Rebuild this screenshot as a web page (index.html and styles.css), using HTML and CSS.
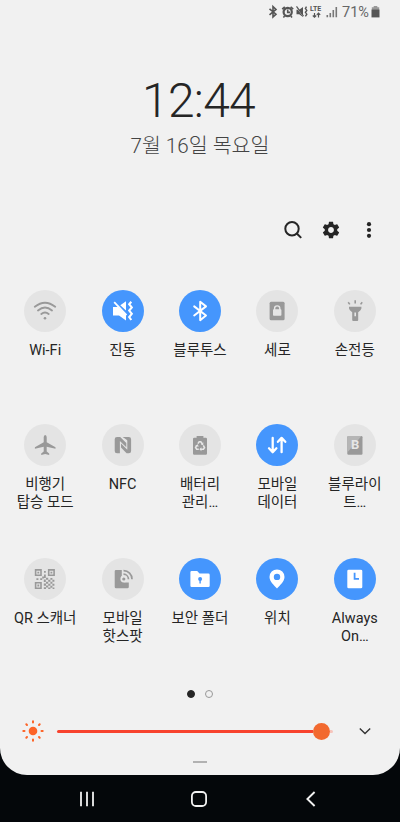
FILE: index.html
```html
<!DOCTYPE html>
<html lang="ko">
<head>
<meta charset="utf-8">
<title>빠른 설정</title>
<link rel="stylesheet" href="styles.css">
</head>
<body>
<main class="panel">
  <header class="status">
    <svg class="status-icons" width="78" height="16" viewBox="0 0 78 16" fill="none" stroke="#555" stroke-width="1.6">
      <path d="M1.5 4.8L8 10.2L5 13V2.6L8 5.4L1.5 10.8"/>
      <circle cx="19.7" cy="8" r="4.1" stroke-width="2.2"/>
      <path d="M14.2 5.2L16.8 2.8M25.2 5.2L22.6 2.8M19.7 5.5V8.4H22M16.6 12L15.4 13.4M22.8 12L24 13.4"/>
      <path d="M28.5 5.8H31.2L35 3V13L31.2 10.2H28.5Z" fill="#555" stroke="none"/>
      <path d="M27.8 2.2L36 13.4" stroke="#f1f1f1" stroke-width="1"/>
      <path d="M28.5 2.4L35.5 12.2" stroke-width="1.2"/>
      <path d="M38.5 2.6L37.4 4.5L38.8 6.4L37.4 8.3L38.8 10.2L37.4 12.4" stroke-width="1.4"/>
      <path d="M46.5 9V13.2M44.8 11.5L46.5 13.2L48.2 11.5M50.5 13.4V9.2M48.8 10.9L50.5 9.2L52.2 10.9" stroke-width="1.2"/>
      <text x="42" y="7.2" class="lte">LTE</text>
      <path d="M59.3 11V13.2M62.3 9V13.2M65.3 6V13.2M68.3 3V13.2" stroke="#777" stroke-width="1.6"/>
    </svg>
    <span class="percent">71%</span>
    <svg width="9" height="14" viewBox="0 0 9 14"><path d="M2.7 1H6.3V2.2H8.2V5H.8V2.2H2.7Z" fill="#999"/><path d="M.5 4.6H8.5V12.4H.5Z" fill="#555"/></svg>
  </header>

  <time class="clock">12:44</time>
  <div class="date">7월 16일 목요일</div>

  <nav class="actions">
    <svg width="20" height="20" viewBox="0 0 20 20" fill="none" stroke="#252525" stroke-width="2"><circle cx="9" cy="8.7" r="6.7"/><path d="M13.8 13.5L18.2 17.9"/></svg>
    <svg width="20" height="20" viewBox="0 0 24 24" fill="#252525"><path d="M19.43 12.98c.04-.32.07-.64.07-.98s-.03-.66-.07-.98l2.11-1.65c.19-.15.24-.42.12-.64l-2-3.46c-.12-.22-.39-.3-.61-.22l-2.49 1c-.52-.4-1.08-.73-1.69-.98l-.38-2.65C14.46 2.18 14.25 2 14 2h-4c-.25 0-.46.18-.49.42l-.38 2.65c-.61.25-1.17.59-1.69.98l-2.49-1c-.23-.09-.49 0-.61.22l-2 3.46c-.13.22-.07.49.12.64l2.11 1.65c-.04.32-.07.65-.07.98s.03.66.07.98l-2.11 1.65c-.19.15-.24.42-.12.64l2 3.46c.12.22.39.3.61.22l2.49-1c.52.4 1.08.73 1.69.98l.38 2.65c.03.24.24.42.49.42h4c.25 0 .46-.18.49-.42l.38-2.65c.61-.25 1.17-.59 1.69-.98l2.49 1c.23.09.49 0 .61-.22l2-3.46c.12-.22.07-.49-.12-.64l-2.11-1.65zM12 15.5c-1.93 0-3.5-1.57-3.5-3.5s1.57-3.5 3.5-3.5 3.5 1.57 3.5 3.5-1.57 3.5-3.5 3.5z"/></svg>
    <svg width="20" height="20" viewBox="0 0 20 20" fill="#252525"><circle cx="10" cy="4.2" r="2.1"/><circle cx="10" cy="10" r="2.1"/><circle cx="10" cy="15.8" r="2.1"/></svg>
  </nav>

  <section class="tiles">
    <div class="tile"><svg class="icon" viewBox="0 0 42 42" fill="none" stroke="#999" stroke-width="1.9" stroke-linecap="round"><path d="M10.8 16.7Q21 8.6 31.2 16.7M14 20.4Q21 14.8 28 20.4M17.3 24Q21 21 24.7 24"/><circle cx="21" cy="28.2" r="1.3" fill="#999" stroke="none"/></svg><span>Wi-Fi</span></div>
    <div class="tile on"><svg class="icon" viewBox="0 0 42 42" fill="#fff"><path d="M11 17H16L24 25V30.6L17 25.5H11ZM18.3 15.2L24 11.3V20.5Z"/><path d="M12.2 12.2L24.5 25.2" stroke="#fff" stroke-width="1.8"/><path d="M29.3 11.8L27.2 14.2L29.8 17.4L27.2 20.6L29.8 23.8L27.2 27L29.3 30" fill="none" stroke="#fff" stroke-width="2.1"/></svg><span>진동</span></div>
    <div class="tile on"><svg class="icon" viewBox="0 0 42 42" fill="none" stroke="#fff" stroke-width="2" stroke-linejoin="round" stroke-linecap="round"><path d="M15.2 16.4L27 25.5L21.2 30.2V11.8L27 16.4L15.2 25.5"/></svg><span>블루투스</span></div>
    <div class="tile"><svg class="icon" viewBox="0 0 42 42"><rect x="13.6" y="11.7" width="15" height="18.6" rx="1.5" fill="#999"/><rect x="17" y="19.3" width="8.4" height="6.4" rx=".8" fill="#e6e6e6"/><path d="M18.6 20V18.5A2.6 2.6 0 0 1 23.8 18.5V20" fill="none" stroke="#e6e6e6" stroke-width="1.4"/></svg><span>세로</span></div>
    <div class="tile"><svg class="icon" viewBox="0 0 42 42" fill="#999"><path d="M15 16.8H27.4V18.5Q27.2 20 24.2 22.2V30Q24.2 31 23.2 31H19.2Q18.2 31 18.2 30V22.2Q15.2 20 15 18.5Z"/><path d="M21.2 22.5V26.3" stroke="#e6e6e6" stroke-width="1.6"/><path d="M21.2 10.2V13.4M14.2 12.2L15.8 14.4M28.2 12.2L26.6 14.4" stroke="#999" stroke-width="1.6"/></svg><span>손전등</span></div>

    <div class="tile"><svg class="icon" viewBox="0 0 42 42" fill="#999"><path d="M21.2 11Q22.7 11.4 22.7 13.2V18.2L31.5 23.2V24.8L22.7 22.7V27.4L25.2 29.6V31L21.2 30L17.2 31V29.6L19.7 27.4V22.7L10.9 24.8V23.2L19.7 18.2V13.2Q19.7 11.4 21.2 11Z"/></svg><span>비행기<br>탑승 모드</span></div>
    <div class="tile"><svg class="icon" viewBox="0 0 42 42" fill="#999"><path d="M15 13H18.2L24.3 19V23.2L17.9 17V29.3H15Q12.7 29.3 12.7 27V15.3Q12.7 13 15 13Z"/><path d="M20.6 13H26.8Q29.1 13 29.1 15.3V27Q29.1 29.3 26.8 29.3H24.6L19 23.6V19.6L25.3 25.8V16.4L24.3 15.6Z"/></svg><span>NFC</span></div>
    <div class="tile"><svg class="icon" viewBox="0 0 42 42"><path d="M17.6 12H24.4V13.7H26.8Q28 13.7 28 15V29.4Q28 30.7 26.8 30.7H15.2Q14 30.7 14 29.4V15Q14 13.7 15.2 13.7H17.6Z" fill="#999"/><path d="M18.9 19.6L20.2 17.8H21.8L23.2 19.8M24.3 21.4L25.5 23.6L24.4 25.3H21.8M19.8 25.3H17.7L16.6 23.4L17.8 21.4" fill="none" stroke="#e6e6e6" stroke-width="1.6"/><path d="M24.3 18.2V21.2L21.8 20.4ZM22.4 23.3V27.3L20.4 25.3ZM16.4 21.6L19 20.2L19.5 23Z" fill="#e6e6e6"/></svg><span>배터리<br>관리…</span></div>
    <div class="tile on"><svg class="icon" viewBox="0 0 42 42" fill="none" stroke="#fff" stroke-width="2.3" stroke-linecap="round" stroke-linejoin="round"><path d="M16.7 13.9V28M13 24.3L16.7 28.2L20.4 24.3M25.6 28.2V14.2M21.9 17.8L25.6 13.9L29.3 17.8"/></svg><span>모바일<br>데이터</span></div>
    <div class="tile"><svg class="icon" viewBox="0 0 42 42"><rect x="13.3" y="12" width="15.2" height="18.7" rx="1.2" fill="#999"/><path d="M14.3 12H27.5L13.3 28.6V13Q13.3 12 14.3 12Z" fill="#b5b5b5"/><text x="21.1" y="25.4" class="letter">B</text></svg><span>블루라이<br>트…</span></div>

    <div class="tile"><svg class="icon" viewBox="0 0 42 42" fill="none" stroke="#999" stroke-width="1.6"><path d="M11.6 11.9h5.4v5.4h-5.4zM24.7 11.9h5.4v5.4h-5.4zM11.6 24.8h5.4v5.4h-5.4z"/><g fill="#999" stroke="none"><path d="M13.4 13.7h1.8v1.8h-1.8zM26.5 13.7h1.8v1.8h-1.8zM13.4 26.6h1.8v1.8h-1.8zM20 13h1.8v1.8H20zM20 16.5h1.8V20H20zM12.4 20.2h2v1.8h-2zM16.2 20.2h2v1.8h-2zM18.2 18.6h1.8v1.8h-1.8zM19.8 21.5h2v2.5h-2zM22 19.8h2.2v2H22zM24.2 21.7h2.2v2h-2.2zM26.4 20h2v1.8h-2zM28.4 21.8h2v2h-2zM22 23.8h2.2v2H22zM26.4 23.7h2v2h-2zM19.8 25.5h2.2v2.2h-2.2zM24.2 25.7h2.2v2h-2.2zM28.4 25.7h2v2h-2zM22 27.5h2.2v2H22zM26.4 27.7h2v2h-2zM19.8 29.2h2.2V31h-2.2zM24.2 29.4h2.2V31h-2.2zM28.6 29.4h1.8V31h-1.8z"/></g></svg><span>QR 스캐너</span></div>
    <div class="tile"><svg class="icon" viewBox="0 0 42 42"><path d="M14 12H19.8V20.2A3.5 3.5 0 0 0 23 24.5H26.8V28.9Q26.8 30.3 25.4 30.3H14Q12.7 30.3 12.7 28.9V13.3Q12.7 12 14 12Z" fill="#999"/><circle cx="21.8" cy="21" r="3.4" fill="#e6e6e6"/><circle cx="21.8" cy="21" r="1.6" fill="#999"/><path d="M21.5 16.2A5.1 5.1 0 0 1 26.5 21.3M21.5 12.7A8.4 8.4 0 0 1 30 21.3" fill="none" stroke="#999" stroke-width="1.7"/></svg><span>모바일<br>핫스팟</span></div>
    <div class="tile on"><svg class="icon" viewBox="0 0 42 42"><path d="M12.6 13H18.2L20.5 15.6H29.4Q30.7 15.6 30.7 16.9V27.8Q30.7 29 29.4 29H12.6Q11.4 29 11.4 27.8V14.2Q11.4 13 12.6 13Z" fill="#fff"/><circle cx="21.1" cy="21.1" r="2" fill="#4596fd"/><path d="M20.4 21.5H21.8V25.6H20.4Z" fill="#4596fd"/></svg><span>보안 폴더</span></div>
    <div class="tile on"><svg class="icon" viewBox="0 0 42 42"><path fill-rule="evenodd" d="M21 11.4A7.5 7.5 0 0 1 28.5 18.9C28.5 23.2 24 27.2 21 30.4C18 27.2 13.5 23.2 13.5 18.9A7.5 7.5 0 0 1 21 11.4ZM21 15.7A3.2 3.2 0 1 0 21 22.1A3.2 3.2 0 1 0 21 15.7Z" fill="#fff"/></svg><span>위치</span></div>
    <div class="tile on"><svg class="icon" viewBox="0 0 42 42"><rect x="13.3" y="11.7" width="15" height="18.6" rx="1.4" fill="#fff"/><path d="M20.6 14.8V20.9H25" fill="none" stroke="#4596fd" stroke-width="1.8"/></svg><span>Always<br>On…</span></div>
  </section>

  <div class="pages"><i class="dot current"></i><i class="dot"></i></div>

  <div class="brightness">
    <svg width="24" height="24" viewBox="0 0 24 24" fill="#fd6428" stroke="#fd6428" stroke-width="2" stroke-linecap="round"><circle cx="12" cy="12" r="4.3" stroke="none"/><path d="M12 2.3V3.5M12 20.5V21.7M2.3 12H3.5M20.5 12H21.7M5.3 5.3L6 6M18 18L18.7 18.7M5.3 18.7L6 18M18 6L18.7 5.3"/></svg>
    <div class="slider"><div class="fill"></div><div class="knob"></div><div class="rest"></div></div>
    <svg width="14" height="10" viewBox="0 0 14 10" fill="none" stroke="#333" stroke-width="1.4"><path d="M1.8 2.4L7 7.5L12.2 2.4"/></svg>
  </div>
  <div class="handle"></div>
</main>

<footer class="navbar">
  <svg width="16" height="16" viewBox="0 0 16 16" stroke="#f1f1f1" stroke-width="1.8"><path d="M2 .8V15.2M8 .8V15.2M14 .8V15.2"/></svg>
  <svg width="16" height="16" viewBox="0 0 16 16" fill="none" stroke="#f1f1f1" stroke-width="1.8"><rect x=".9" y="1" width="14.2" height="14" rx="4"/></svg>
  <svg width="16" height="16" viewBox="0 0 16 16" fill="none" stroke="#f1f1f1" stroke-width="1.9"><path d="M11.6 1L4.4 8L11.6 15"/></svg>
</footer>
</body>
</html>
```

FILE: styles.css
```css
* { box-sizing: border-box; }

body {
  margin: 0;
  width: 400px;
  height: 822px;
  overflow: hidden;
  background: #04070a;
  color: #252525;
  font-family: Roboto, "Noto Sans CJK KR", sans-serif;
}

svg { display: block; flex: none; }

.panel {
  height: 775px;
  display: flex;
  flex-direction: column;
  background: #f1f1f1;
  border-radius: 0 0 27px 27px;
}

.status {
  height: 25px;
  padding-right: 20px;
  display: flex;
  align-items: center;
  justify-content: flex-end;
  color: #666;
}
.status svg { margin-top: -1px; }
.status-icons { margin-right: -4px; }
.percent { width: 28px; margin-right: 1px; font-size: 14.5px; line-height: 25px; }
.lte { font: 700 7px Roboto, sans-serif; fill: #555; stroke: none; }

.clock {
  height: 58px;
  margin: 47px 3px 0 0;
  line-height: 58px;
  font-size: 48px;
  font-weight: 300;
  text-align: center;
  letter-spacing: -.7px;
}

.date {
  height: 30px;
  margin-top: 1px;
  line-height: 30px;
  font-size: 20.6px;
  font-weight: 300;
  text-align: center;
  color: #444;
}

.actions {
  margin: 59px 21px 0 0;
  display: flex;
  justify-content: flex-end;
  gap: 18px;
}

.tiles {
  margin: 50px 6.5px 0;
  display: grid;
  grid-template-columns: repeat(5, 1fr);
  grid-auto-rows: 134px;
}
.tile {
  display: flex;
  flex-direction: column;
  align-items: center;
  text-align: center;
  white-space: nowrap;
  font-size: 14.5px;
  line-height: 17.5px;
}
.icon {
  width: 42px;
  height: 42px;
  margin-bottom: 10px;
  border-radius: 50%;
  background: #e4e4e4;
}
.on .icon { background: #4596fd; }
.letter { font: 700 13px Roboto, sans-serif; fill: #e6e6e6; text-anchor: middle; }

.pages {
  height: 8px;
  margin-top: -2px;
  display: flex;
  justify-content: center;
  gap: 10px;
}
.dot { width: 8px; height: 8px; border: 1.5px solid #999; border-radius: 50%; }
.current { background: #252525; border-color: #252525; }

.brightness {
  height: 24px;
  margin-top: 21px;
  padding: 0 28px 0 21px;
  display: flex;
  align-items: center;
}
.slider { width: 276px; margin: 0 auto 0 12px; display: flex; align-items: center; }
.fill { flex: 1; height: 3px; background: #f8432e; border-radius: 2px 0 0 2px; }
.knob { width: 17px; height: 17px; border-radius: 50%; background: #f2692f; }
.rest { width: 3.5px; height: 3px; background: #f6c4bb; border-radius: 0 2px 2px 0; }

.handle { width: 14px; height: 2px; margin: 18px auto 0; background: #b2b2b2; }

.navbar {
  height: 47px;
  padding: 1px 81px 0 79px;
  display: flex;
  align-items: center;
  justify-content: space-between;
}
```
